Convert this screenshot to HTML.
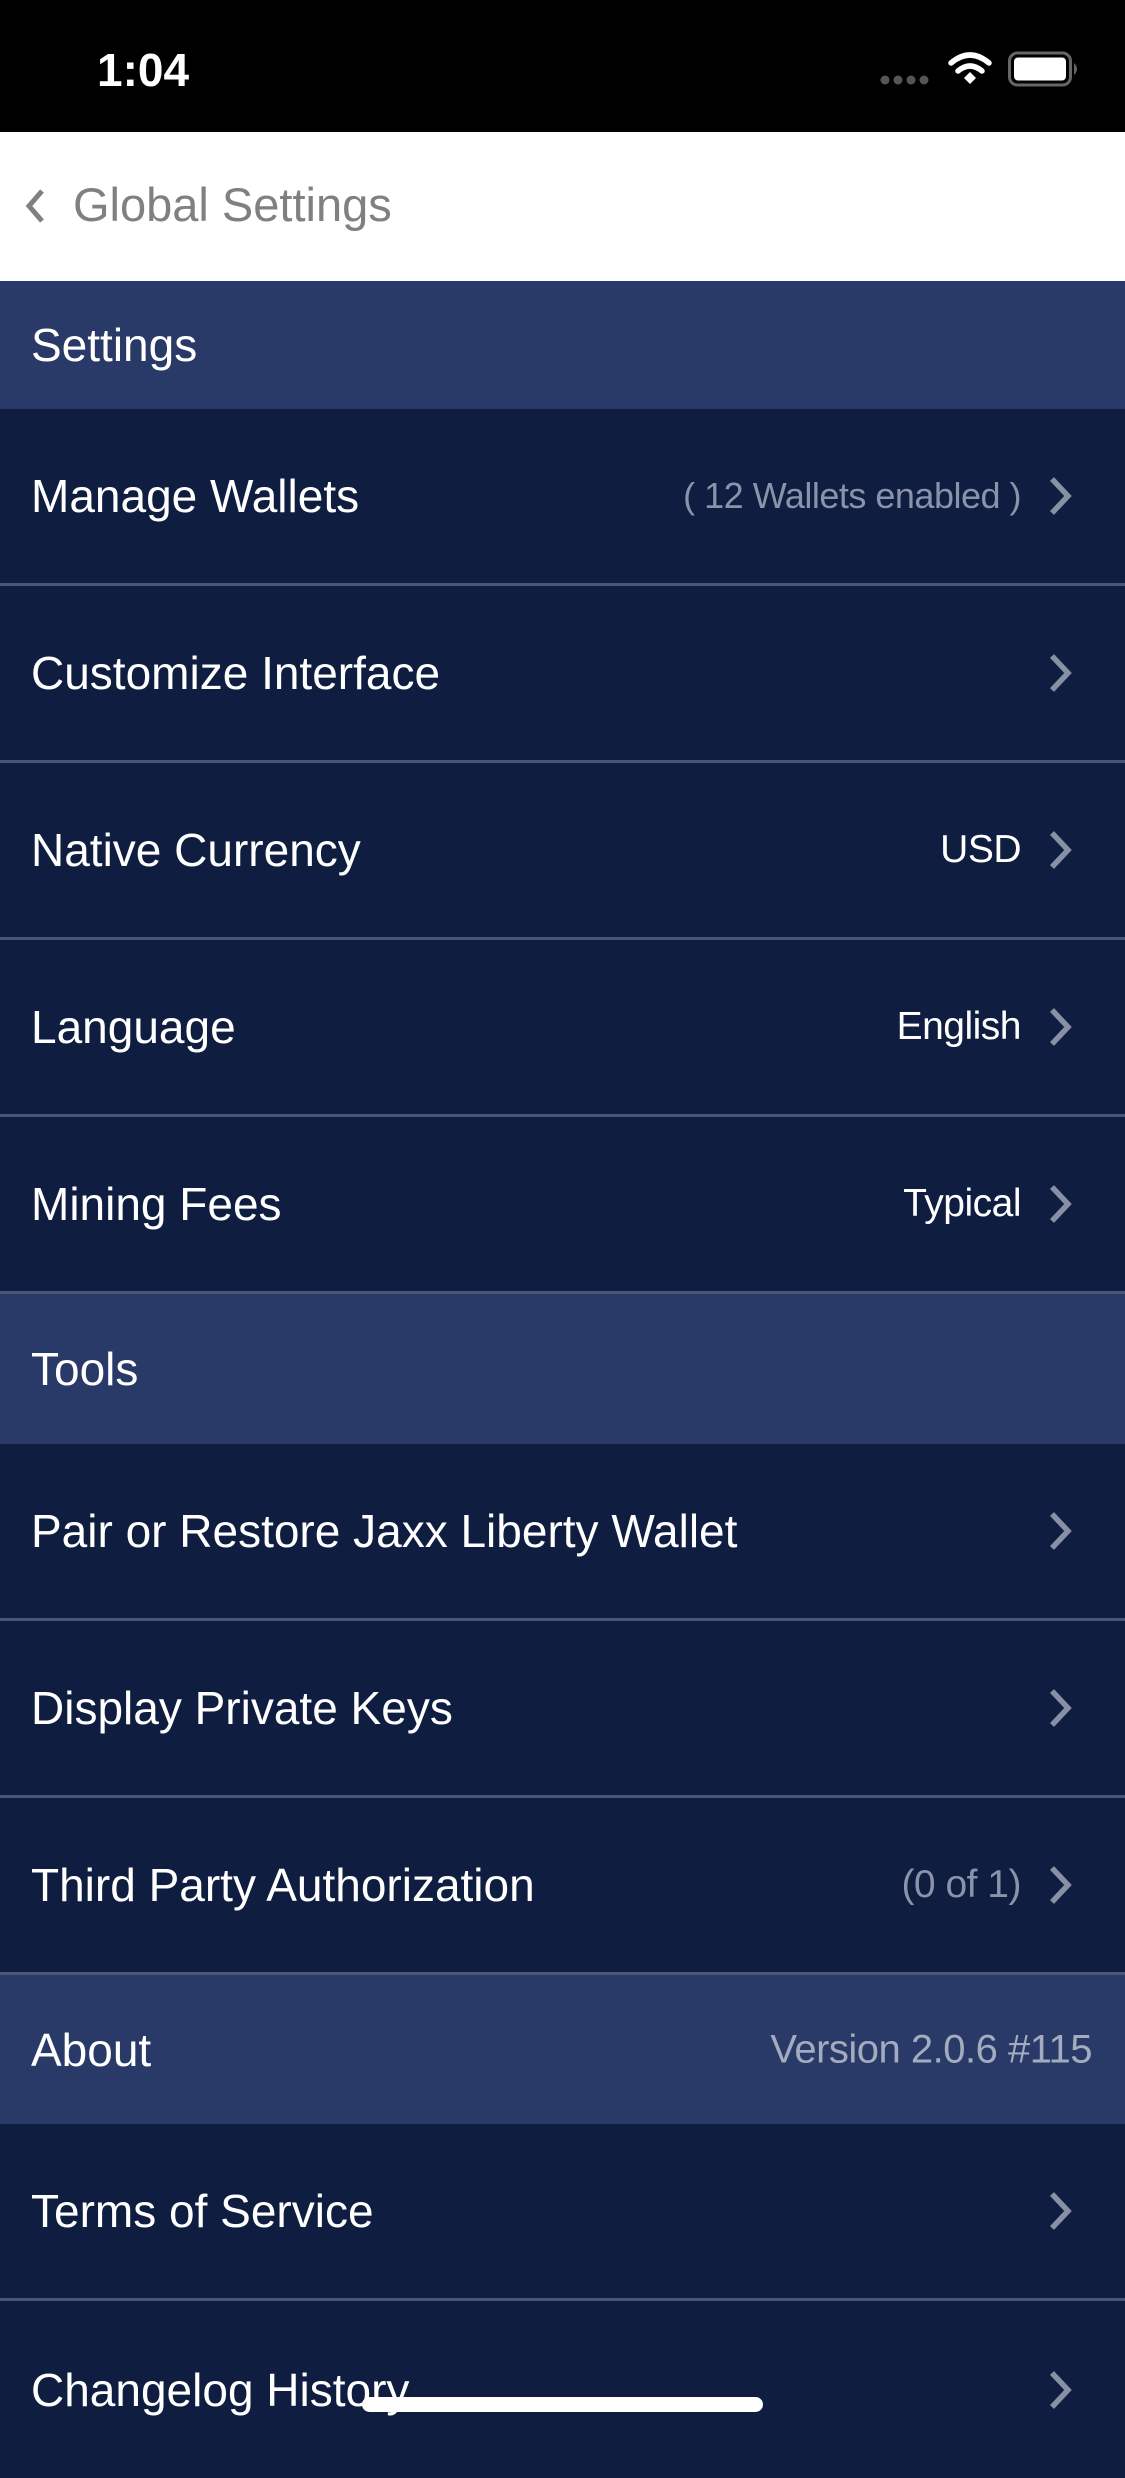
<!DOCTYPE html>
<html><head><meta charset="utf-8"><style>
*{margin:0;padding:0;box-sizing:border-box}
body{width:1125px;height:2436px;overflow:hidden;background:#0f1d40;font-family:"Liberation Sans",sans-serif;position:relative;color:#fff}
.abs{position:absolute}
.row{position:absolute;left:0;width:1125px;height:177px;background:#0f1d40;border-bottom:3px solid #4a5676}
.sec{position:absolute;left:0;width:1125px;background:#293a68}
.lbl{position:absolute;left:31px;top:50%;transform:translateY(-50%);font-size:46px;white-space:nowrap}
.val{position:absolute;right:104px;top:50%;transform:translateY(-50%);font-size:39px;white-space:nowrap;letter-spacing:-0.5px}
.chev{position:absolute;left:1048px;top:50%;margin-top:-20px}
</style></head><body>
<div class="abs" style="left:0;top:0;width:1125px;height:132px;background:#000"></div>
<div class="abs" style="left:97px;top:43px;font-size:46px;font-weight:bold;color:#fff">1:04</div>
<svg class="abs" style="left:878px;top:50px" width="210" height="40" viewBox="0 0 210 40">
<g fill="#555"><circle cx="7" cy="30" r="4.5"/><circle cx="20" cy="30" r="4.5"/><circle cx="33" cy="30" r="4.5"/><circle cx="46" cy="30" r="4.5"/></g>
<g fill="none" stroke="#fff" stroke-width="5.5" stroke-linecap="round"><path d="M73 13 Q92 -3 111 13"/><path d="M80 21 Q92 11 104 21"/></g>
<path d="M86 28 L92 22 L98 28 L92 34 Z" fill="#fff"/>
<rect x="131.5" y="3" width="61" height="32" rx="8" fill="none" stroke="#666" stroke-width="3"/>
<rect x="136" y="7.5" width="52" height="23" rx="4" fill="#fff"/>
<path d="M196 13 Q202 19 196 25 Z" fill="#666"/>
</svg>
<div class="abs" style="left:0;top:132px;width:1125px;height:149px;background:#fff"></div>
<svg class="abs" style="left:22px;top:188px" width="28" height="36" viewBox="0 0 28 36"><path d="M20 3 L7 18 L20 33" fill="none" stroke="#808080" stroke-width="5"/></svg>
<div class="abs" style="left:73px;top:177px;font-size:47px;color:#808080">Global Settings</div>

<div class="sec" style="top:281px;height:128px"><div class="lbl">Settings</div></div>
<div class="row" style="top:409px"><div class="lbl">Manage Wallets</div><div class="val" style="color:#8a93aa;font-size:36px">( 12 Wallets enabled )</div><svg class="chev" width="26" height="40" viewBox="0 0 26 40"><path d="M4 3 L20 20 L4 37" fill="none" stroke="#8890a4" stroke-width="5.5"/></svg></div>
<div class="row" style="top:586px"><div class="lbl">Customize Interface</div><svg class="chev" width="26" height="40" viewBox="0 0 26 40"><path d="M4 3 L20 20 L4 37" fill="none" stroke="#8890a4" stroke-width="5.5"/></svg></div>
<div class="row" style="top:763px"><div class="lbl">Native Currency</div><div class="val">USD</div><svg class="chev" width="26" height="40" viewBox="0 0 26 40"><path d="M4 3 L20 20 L4 37" fill="none" stroke="#8890a4" stroke-width="5.5"/></svg></div>
<div class="row" style="top:940px"><div class="lbl">Language</div><div class="val">English</div><svg class="chev" width="26" height="40" viewBox="0 0 26 40"><path d="M4 3 L20 20 L4 37" fill="none" stroke="#8890a4" stroke-width="5.5"/></svg></div>
<div class="row" style="top:1117px"><div class="lbl">Mining Fees</div><div class="val">Typical</div><svg class="chev" width="26" height="40" viewBox="0 0 26 40"><path d="M4 3 L20 20 L4 37" fill="none" stroke="#8890a4" stroke-width="5.5"/></svg></div>

<div class="sec" style="top:1294px;height:150px"><div class="lbl">Tools</div></div>
<div class="row" style="top:1444px"><div class="lbl">Pair or Restore Jaxx Liberty Wallet</div><svg class="chev" width="26" height="40" viewBox="0 0 26 40"><path d="M4 3 L20 20 L4 37" fill="none" stroke="#8890a4" stroke-width="5.5"/></svg></div>
<div class="row" style="top:1621px"><div class="lbl">Display Private Keys</div><svg class="chev" width="26" height="40" viewBox="0 0 26 40"><path d="M4 3 L20 20 L4 37" fill="none" stroke="#8890a4" stroke-width="5.5"/></svg></div>
<div class="row" style="top:1798px"><div class="lbl">Third Party Authorization</div><div class="val" style="color:#8a93aa">(0 of 1)</div><svg class="chev" width="26" height="40" viewBox="0 0 26 40"><path d="M4 3 L20 20 L4 37" fill="none" stroke="#8890a4" stroke-width="5.5"/></svg></div>

<div class="sec" style="top:1975px;height:149px"><div class="lbl">About</div><div class="val" style="right:33px;color:#a3abbe;font-size:40px">Version 2.0.6 #115</div></div>
<div class="row" style="top:2124px"><div class="lbl">Terms of Service</div><svg class="chev" width="26" height="40" viewBox="0 0 26 40"><path d="M4 3 L20 20 L4 37" fill="none" stroke="#8890a4" stroke-width="5.5"/></svg></div>
<div class="row" style="top:2301px;border-bottom:none"><div class="lbl">Changelog History</div><svg class="chev" width="26" height="40" viewBox="0 0 26 40"><path d="M4 3 L20 20 L4 37" fill="none" stroke="#8890a4" stroke-width="5.5"/></svg></div>
<div class="abs" style="left:362px;top:2397px;width:401px;height:15px;border-radius:8px;background:#fff"></div>
</body></html>
